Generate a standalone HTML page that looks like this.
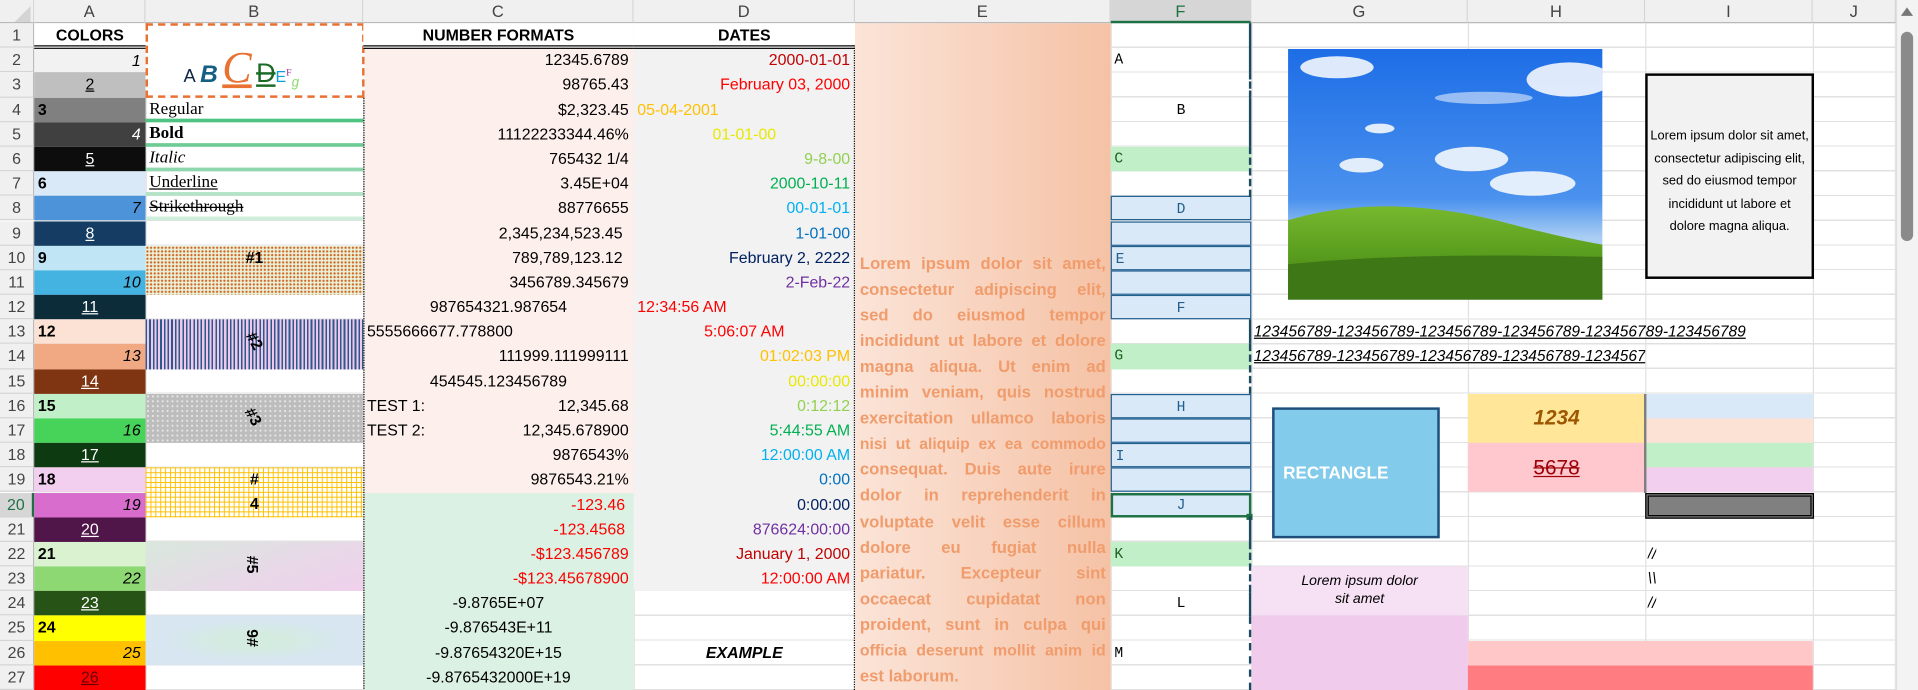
<!DOCTYPE html>
<html><head><meta charset="utf-8"><style>
html,body{margin:0;padding:0;width:1918px;height:690px;overflow:hidden;background:#fff}
#s{position:relative;width:1568px;height:564px;transform:scale(1.22321,1.2234);transform-origin:0 0;font-family:"Liberation Sans Narrow","Liberation Sans",sans-serif;font-size:13px;color:#000;overflow:hidden}
#s div{position:absolute;box-sizing:border-box;white-space:nowrap}
.c{height:20.2px;line-height:20.2px;overflow:hidden}
.r{text-align:right;padding-right:4px}
.l{text-align:left;padding-left:3px}
.m{text-align:center}
.h{top:0;height:19px;line-height:19px;text-align:center;color:#444;font-size:13.5px;background:#f0f0f0;border-right:1px solid #d4d4d4;border-bottom:1px solid #b8b8b8;font-family:"Liberation Sans",sans-serif}
.n{left:0;width:28px;height:20.2px;line-height:20.2px;text-align:center;color:#444;background:#f0f0f0;border-bottom:1px solid #d4d4d4;border-right:1px solid #b8b8b8;font-size:13px;font-family:"Liberation Sans",sans-serif}
.vl{top:19px;height:545px;width:1px;background:#e1e1e1}
.A{left:28px;width:91px}.B{left:119px;width:178px}.C{left:297px;width:221px}.D{left:518px;width:181px}.F{left:908px;width:115px;font-family:"Liberation Mono",monospace;font-size:12px}
.w{color:#fff}.u{text-decoration:underline}.i{font-style:italic}.b{font-weight:bold}
.ser{font-family:"Liberation Serif",serif;font-size:14px}
.fb{background:#dae9f8;border:1px solid #215f8f;color:#215f8f}
.fg{background:#c1f0c8;color:#1b5e20}
.el{left:703px;width:201px;height:21.1px;line-height:21.1px;font-weight:bold;font-size:13.6px;color:#f09c6c;text-align:justify;text-align-last:justify;overflow:visible}
</style></head><body><div id="s">
<!-- grid -->
<div style="left:28px;top:19px;width:1522px;height:545px;background:repeating-linear-gradient(to bottom,transparent 0,transparent 19.185px,#e1e1e1 19.185px,#e1e1e1 20.185px)"></div>
<div class="vl" style="left:119px"></div><div class="vl" style="left:297px"></div><div class="vl" style="left:518px"></div><div class="vl" style="left:699px"></div><div class="vl" style="left:908px"></div><div class="vl" style="left:1023px"></div><div class="vl" style="left:1200px"></div><div class="vl" style="left:1345px"></div><div class="vl" style="left:1482px"></div><div class="vl" style="left:1549px"></div>
<!-- headers -->
<div class="h" style="left:0;width:28px"></div>
<div style="left:12px;top:5px;width:0;height:0;border-left:13px solid transparent;border-bottom:13px solid #d4d4d4"></div>
<div class="h" style="left:28px;width:91px">A</div><div class="h" style="left:119px;width:178px">B</div><div class="h" style="left:297px;width:221px">C</div><div class="h" style="left:518px;width:181px">D</div><div class="h" style="left:699px;width:209px">E</div>
<div class="h" style="left:908px;width:115px;background:#d6d6d6;border-bottom:2px solid #1e7145;color:#1e7145">F</div>
<div class="h" style="left:1023px;width:177px">G</div><div class="h" style="left:1200px;width:145px">H</div><div class="h" style="left:1345px;width:137px">I</div><div class="h" style="left:1482px;width:68px">J</div>
<!-- scrollbar -->
<div style="left:1550px;top:0;width:18px;height:564px;background:#f3f3f3;border-left:1px solid #e0e0e0"></div>
<div style="left:1554px;top:6px;width:0;height:0;border-left:5px solid transparent;border-right:5px solid transparent;border-bottom:7px solid #777"></div>
<div style="left:1554px;top:26px;width:10px;height:171px;background:#8a8a8a;border-radius:5px"></div>
<!-- row numbers -->
<div class="n" style="top:19px">1</div><div class="n" style="top:39.2px">2</div><div class="n" style="top:59.4px">3</div><div class="n" style="top:79.6px">4</div><div class="n" style="top:99.7px">5</div><div class="n" style="top:119.9px">6</div><div class="n" style="top:140.1px">7</div><div class="n" style="top:160.3px">8</div><div class="n" style="top:180.5px">9</div><div class="n" style="top:200.7px">10</div><div class="n" style="top:220.9px">11</div><div class="n" style="top:241px">12</div><div class="n" style="top:261.2px">13</div><div class="n" style="top:281.4px">14</div><div class="n" style="top:301.6px">15</div><div class="n" style="top:321.8px">16</div><div class="n" style="top:342px">17</div><div class="n" style="top:362.1px">18</div><div class="n" style="top:382.3px">19</div>
<div class="n" style="top:402.5px;background:#d6d6d6;color:#1e7145;border-right:2px solid #1e7145">20</div>
<div class="n" style="top:422.7px">21</div><div class="n" style="top:442.9px">22</div><div class="n" style="top:463.1px">23</div><div class="n" style="top:483.3px">24</div><div class="n" style="top:503.4px">25</div><div class="n" style="top:523.6px">26</div><div class="n" style="top:543.8px">27</div>

<!-- Column A -->
<div class="c A m b" style="top:19px;height:21px;border-bottom:3px double #000;background:#fff">COLORS</div>
<div class="c A r i" style="top:40.2px;background:#f2f2f2;height:19.2px">1</div>
<div class="c A m u" style="top:59.4px;background:#bfbfbf">2</div>
<div class="c A l b" style="top:79.6px;background:#808080">3</div>
<div class="c A r i w" style="top:99.7px;background:#404040">4</div>
<div class="c A m u w" style="top:119.9px;background:#0d0d0d">5</div>
<div class="c A l b" style="top:140.1px;background:#dae9f8">6</div>
<div class="c A r i" style="top:160.3px;background:#4d93d9">7</div>
<div class="c A m u w" style="top:180.5px;background:#153d64">8</div>
<div class="c A l b" style="top:200.7px;background:#c0e6f5">9</div>
<div class="c A r i" style="top:220.9px;background:#44b3e1">10</div>
<div class="c A m u w" style="top:241px;background:#0c2c3a">11</div>
<div class="c A l b" style="top:261.2px;background:#fbe2d5">12</div>
<div class="c A r i" style="top:281.4px;background:#f1a983">13</div>
<div class="c A m u w" style="top:301.6px;background:#7f3511">14</div>
<div class="c A l b" style="top:321.8px;background:#c1f0c8">15</div>
<div class="c A r i" style="top:342px;background:#47d359">16</div>
<div class="c A m u w" style="top:362.1px;background:#0e3a12">17</div>
<div class="c A l b" style="top:382.3px;background:#f2ceef">18</div>
<div class="c A r i" style="top:402.5px;background:#d86dcd">19</div>
<div class="c A m u w" style="top:422.7px;background:#501549">20</div>
<div class="c A l b" style="top:442.9px;background:#daf2d0">21</div>
<div class="c A r i" style="top:463.1px;background:#8ed873">22</div>
<div class="c A m u w" style="top:483.3px;background:#275317">23</div>
<div class="c A l b" style="top:503.4px;background:#ffff00">24</div>
<div class="c A r i" style="top:523.6px;background:#ffc000">25</div>
<div class="c A m u" style="top:543.8px;background:#ff0000;color:#600">26</div>

<!-- Column B -->
<div style="left:119px;top:19px;width:179px;height:61px;border:2px dashed #e97132;background:#fff"></div>
<div style="left:150px;top:38px;height:34px;line-height:34px;font-family:'Liberation Sans',sans-serif">
<span style="font-size:15px;color:#0e2841">A</span>
<span style="font-size:20px;color:#156082;font-weight:bold;font-style:italic">B</span>
<span style="font-size:36px;color:#e97132;font-style:italic;font-family:'Liberation Serif',serif;text-decoration:underline">C</span>
<span style="font-size:22px;color:#196b24;text-decoration:underline line-through">D</span><span style="font-size:13px;color:#0f9ed5;text-decoration:underline double line-through">E</span><sup style="font-size:8px;color:#a02b93;font-family:'Liberation Serif',serif">F</sup><sub style="font-size:11px;color:#8ed873;font-style:italic">g</sub></div>
<div class="c B l ser" style="top:79.6px;border-bottom:3px solid #4fc381">Regular</div>
<div class="c B l ser b" style="top:99.7px;border-bottom:3px solid #6ecb96">Bold</div>
<div class="c B l ser i" style="top:119.9px;border-bottom:3px solid #8ed6ab">Italic</div>
<div class="c B l ser u" style="top:140.1px;border-bottom:3px solid #b2e3c6">Underline</div>
<div class="c B l ser" style="top:160.3px;border-bottom:3px solid #cdeedb;text-decoration:line-through">Strikethrough</div>
<div class="B m b" style="top:200.7px;height:40.3px;line-height:20px;background-color:#eaf0d8;background-image:radial-gradient(#d06a2a 0.8px,transparent 1.1px);background-size:3px 3px">#1</div>
<div class="B m b" style="top:261.2px;height:40.4px;background:repeating-linear-gradient(to right,#2a5a8a 0,#2a5a8a 1.3px,#f0c8ec 1.3px,#f0c8ec 3px)"><span style="position:absolute;left:82px;top:10px;display:block;transform:rotate(60deg);background:transparent">#2</span></div>
<div class="B m b" style="top:321.8px;height:40.3px;background-color:#bdbdbd;background-image:radial-gradient(#e8e8e8 0.7px,transparent 1px);background-size:4px 4px"><span style="position:absolute;left:81px;top:11px;display:block;transform:rotate(60deg)">#3</span></div>
<div class="B m b" style="top:382.3px;height:40.4px;line-height:20px;background-color:#fff;background-image:linear-gradient(#ffc000 1px,transparent 1px),linear-gradient(90deg,#ffc000 1px,transparent 1px);background-size:4px 4px">#<br>4</div>
<div class="B m b" style="top:442.9px;height:40.4px;background:linear-gradient(160deg,#d8e8dc,#e8d8e8 60%,#f0d0ec)"><span style="position:absolute;left:80px;top:11px;display:block;transform:rotate(90deg)">#5</span></div>
<div class="B m b" style="top:503.4px;height:40.4px;background:radial-gradient(ellipse at 50% 50%,#d4ecdf 20%,#d8e6f2 60%)"><span style="position:absolute;left:80px;top:11px;display:block;transform:rotate(-90deg)">#6</span></div>
<div style="left:297px;top:79.6px;width:0;height:485px;border-left:1px dotted #000"></div>

<!-- Column C -->
<div style="left:298px;top:40px;width:220px;height:362.5px;background:#fdf0ec"></div>
<div style="left:298px;top:402.5px;width:220px;height:162px;background:#dbf1e3"></div>
<div class="c C m b" style="top:19px;height:21px;border-bottom:3px double #000;background:#fff">NUMBER FORMATS</div>
<div class="c C r" style="top:39.2px">12345.6789</div>
<div class="c C r" style="top:59.4px">98765.43</div>
<div class="c C r" style="top:79.6px">$2,323.45</div>
<div class="c C r" style="top:99.7px">11122233344.46%</div>
<div class="c C r" style="top:119.9px">765432 1/4</div>
<div class="c C r" style="top:140.1px">3.45E+04</div>
<div class="c C r" style="top:160.3px">88776655</div>
<div class="c C r" style="top:180.5px;padding-right:9px">2,345,234,523.45</div>
<div class="c C r" style="top:200.7px;padding-right:9px">789,789,123.12</div>
<div class="c C r" style="top:220.9px">3456789.345679</div>
<div class="c C m" style="top:241px">987654321.987654</div>
<div class="c C l" style="top:261.2px">5555666677.778800</div>
<div class="c C r" style="top:281.4px">111999.111999111</div>
<div class="c C m" style="top:301.6px">454545.123456789</div>
<div class="c C l" style="top:321.8px">TEST 1:</div><div class="c C r" style="top:321.8px">12,345.68</div>
<div class="c C l" style="top:342px">TEST 2:</div><div class="c C r" style="top:342px">12,345.678900</div>
<div class="c C r" style="top:362.1px">9876543%</div>
<div class="c C r" style="top:382.3px">9876543.21%</div>
<div class="c C r" style="top:402.5px;color:#f00;padding-right:7px">-123.46</div>
<div class="c C r" style="top:422.7px;color:#f00;padding-right:7px">-123.4568</div>
<div class="c C r" style="top:442.9px;color:#f00">-$123.456789</div>
<div class="c C r" style="top:463.1px;color:#f00">-$123.45678900</div>
<div class="c C m" style="top:483.3px">-9.8765E+07</div>
<div class="c C m" style="top:503.4px">-9.876543E+11</div>
<div class="c C m" style="top:523.6px">-9.87654320E+15</div>
<div class="c C m" style="top:543.8px">-9.8765432000E+19</div>

<!-- Column D -->
<div style="left:518px;top:40px;width:181px;height:443.3px;background:#f2f2f2"></div>
<div class="c D m b" style="top:19px;height:21px;border-bottom:3px double #000;background:#fff">DATES</div>
<div class="c D r" style="top:39.2px;color:#c00000">2000-01-01</div>
<div class="c D r" style="top:59.4px;color:#f00">February 03, 2000</div>
<div class="c D l" style="top:79.6px;color:#ffc000">05-04-2001</div>
<div class="c D m" style="top:99.7px;color:#e8e800">01-01-00</div>
<div class="c D r" style="top:119.9px;color:#92d050">9-8-00</div>
<div class="c D r" style="top:140.1px;color:#00b050">2000-10-11</div>
<div class="c D r" style="top:160.3px;color:#00b0f0">00-01-01</div>
<div class="c D r" style="top:180.5px;color:#0070c0">1-01-00</div>
<div class="c D r" style="top:200.7px;color:#002060">February 2, 2222</div>
<div class="c D r" style="top:220.9px;color:#7030a0">2-Feb-22</div>
<div class="c D l" style="top:241px;color:#f00">12:34:56 AM</div>
<div class="c D m" style="top:261.2px;color:#f00">5:06:07 AM</div>
<div class="c D r" style="top:281.4px;color:#ffc000">01:02:03 PM</div>
<div class="c D r" style="top:301.6px;color:#e8e800">00:00:00</div>
<div class="c D r" style="top:321.8px;color:#92d050">0:12:12</div>
<div class="c D r" style="top:342px;color:#00b050">5:44:55 AM</div>
<div class="c D r" style="top:362.1px;color:#00b0f0">12:00:00 AM</div>
<div class="c D r" style="top:382.3px;color:#0070c0">0:00</div>
<div class="c D r" style="top:402.5px;color:#002060">0:00:00</div>
<div class="c D r" style="top:422.7px;color:#7030a0">876624:00:00</div>
<div class="c D r" style="top:442.9px;color:#c00000">January 1, 2000</div>
<div class="c D r" style="top:463.1px;color:#f00">12:00:00 AM</div>
<div class="c D m b i" style="top:523.6px">EXAMPLE</div>
<div style="left:698px;top:39px;width:0;height:525px;border-left:1px dotted #000"></div>

<!-- Column E -->
<div style="left:699px;top:19px;width:209px;height:545px;background:linear-gradient(to right,#fbe4d8,#f5c2a5)"></div>
<div class="el" style="top:204.5px">Lorem ipsum dolor sit amet,</div>
<div class="el" style="top:225.6px">consectetur adipiscing elit,</div>
<div class="el" style="top:246.7px">sed do eiusmod tempor</div>
<div class="el" style="top:267.8px">incididunt ut labore et dolore</div>
<div class="el" style="top:288.9px">magna aliqua. Ut enim ad</div>
<div class="el" style="top:310px">minim veniam, quis nostrud</div>
<div class="el" style="top:331.1px">exercitation ullamco laboris</div>
<div class="el" style="top:352.2px;font-size:12.8px">nisi ut aliquip ex ea commodo</div>
<div class="el" style="top:373.3px">consequat. Duis aute irure</div>
<div class="el" style="top:394.4px">dolor in reprehenderit in</div>
<div class="el" style="top:415.5px">voluptate velit esse cillum</div>
<div class="el" style="top:436.6px">dolore eu fugiat nulla</div>
<div class="el" style="top:457.7px">pariatur. Excepteur sint</div>
<div class="el" style="top:478.8px">occaecat cupidatat non</div>
<div class="el" style="top:499.9px">proident, sunt in culpa qui</div>
<div class="el" style="top:521px;font-size:13px">officia deserunt mollit anim id</div>
<div class="el" style="top:542.1px;text-align-last:left">est laborum.</div>

<!-- Column F -->
<div class="c F l" style="top:39.2px">A</div>
<div class="c F m" style="top:79.6px">B</div>
<div class="c F l fg" style="top:119.9px">C</div>
<div class="c F m fb" style="top:160.3px">D</div>
<div class="c F fb" style="top:180.5px"></div>
<div class="c F l fb" style="top:200.7px">E</div>
<div class="c F fb" style="top:220.9px"></div>
<div class="c F m fb" style="top:241px">F</div>
<div class="c F l fg" style="top:281.4px">G</div>
<div class="c F m fb" style="top:321.8px">H</div>
<div class="c F fb" style="top:342px"></div>
<div class="c F l fb" style="top:362.1px">I</div>
<div class="c F fb" style="top:382.3px"></div>
<div class="c F m fb" style="top:402.5px;border:2px solid #1e7145;line-height:17px">J</div>
<div style="left:1019px;top:420px;width:5px;height:5px;background:#1e7145"></div>
<div class="c F l fg" style="top:442.9px">K</div>
<div class="c F m" style="top:483.3px">L</div>
<div class="c F l" style="top:523.6px">M</div>
<!-- F right border -->
<div style="left:1021px;top:19px;width:2px;height:40px;background:#1b4a5e"></div>
<div style="left:1021px;top:59px;width:0;height:21px;border-left:2px dashed #1b4a5e"></div>
<div style="left:1021px;top:80px;width:2px;height:40px;background:#1b4a5e"></div>
<div style="left:1021px;top:120px;width:0;height:41px;border-left:2px dashed #1b4a5e"></div>
<div style="left:1021px;top:261px;width:2px;height:20px;background:#1b4a5e"></div>
<div style="left:1021px;top:281px;width:0;height:41px;border-left:2px dashed #1b4a5e"></div>
<div style="left:1021px;top:422px;width:2px;height:21px;background:#1b4a5e"></div>
<div style="left:1021px;top:443px;width:0;height:41px;border-left:2px dashed #1b4a5e"></div>
<div style="left:1021px;top:484px;width:2px;height:20px;background:#1b4a5e"></div>
<div style="left:1021px;top:504px;width:0;height:60px;border-left:2px dashed #1b4a5e"></div>

<!-- Image -->
<svg style="position:absolute;left:1053px;top:40px" width="257" height="205" viewBox="0 0 257 205">
<defs><linearGradient id="sky" x1="0" y1="0" x2="0" y2="1"><stop offset="0" stop-color="#1d6de6"/><stop offset="0.6" stop-color="#4b92ee"/><stop offset="0.75" stop-color="#a9cdf3"/></linearGradient>
<linearGradient id="gr" x1="0" y1="0" x2="0" y2="1"><stop offset="0" stop-color="#77b82e"/><stop offset="0.5" stop-color="#5a9e1e"/><stop offset="1" stop-color="#3c7a14"/></linearGradient></defs>
<rect width="257" height="205" fill="url(#sky)"/>
<g fill="#fff" opacity="0.85"><ellipse cx="40" cy="15" rx="30" ry="9"/><ellipse cx="230" cy="25" rx="35" ry="14"/><ellipse cx="150" cy="90" rx="30" ry="10"/><ellipse cx="200" cy="110" rx="35" ry="10"/><ellipse cx="60" cy="95" rx="18" ry="6"/><ellipse cx="160" cy="40" rx="40" ry="5" opacity="0.6"/><ellipse cx="75" cy="65" rx="12" ry="4"/></g>
<path d="M0 140 C60 122 120 128 170 140 C200 148 230 155 257 160 L257 205 L0 205 Z" fill="url(#gr)"/>
<path d="M0 205 L0 176 C80 168 170 168 257 170 L257 205 Z" fill="#3e7816"/>
</svg>

<!-- I text box -->
<div style="left:1345px;top:60px;width:138px;height:168px;border:2px solid #000;background:#f2f2f2;white-space:normal;text-align:center;font-size:10.5px;line-height:18.5px;padding:40px 2px 0">Lorem ipsum dolor sit amet, consectetur adipiscing elit, sed do eiusmod tempor incididunt ut labore et dolore magna aliqua.</div>

<!-- G13 / G14 -->
<div class="c i" style="left:1025px;top:261.2px;width:424px;font-size:12.7px;text-decoration:underline">123456789-123456789-123456789-123456789-123456789-123456789</div>
<div class="c i" style="left:1025px;top:281.4px;width:320px;font-size:12.7px;text-decoration:underline">123456789-123456789-123456789-123456789-123456789-123456789</div>

<!-- Rectangle -->
<div style="left:1040px;top:333px;width:137px;height:107px;background:#83cbeb;border:2px solid #1f4e79"></div>
<div style="left:1049px;top:378px;color:#fff;font-weight:bold;font-size:14px;line-height:17px">RECTANGLE</div>

<!-- H -->
<div style="left:1200px;top:321.8px;width:145px;height:40.4px;background:#ffe699;text-align:center;line-height:40px;font-size:17px;font-weight:bold;font-style:italic;color:#9c5700">1234</div>
<div style="left:1200px;top:362.1px;width:145px;height:40.4px;background:#ffc7ce;text-align:center;line-height:42px;font-size:17px;color:#9c0006;text-decoration:underline line-through">5678</div>
<!-- I -->
<div class="c" style="left:1345px;top:321.8px;width:137px;background:#dae9f8"></div>
<div class="c" style="left:1345px;top:342px;width:137px;background:#fbe2d5"></div>
<div class="c" style="left:1345px;top:362.1px;width:137px;background:#c1f0c8"></div>
<div class="c" style="left:1345px;top:382.3px;width:137px;background:#f2ceef"></div>
<div style="left:1344px;top:321.8px;width:2px;height:81px;background:#7f7f7f"></div>
<div style="left:1345px;top:402.5px;width:138px;height:21px;background:#808080;border:3px double #000"></div>
<div class="c i" style="left:1347px;top:442.9px">//</div>
<div class="c i" style="left:1347px;top:463.1px">\\</div>
<div class="c i" style="left:1347px;top:483.3px">//</div>
<!-- G23 etc -->
<div style="left:1023px;top:463.1px;width:177px;height:40.4px;background:#f6e1f4;text-align:center;white-space:normal;font-style:italic;font-size:11.5px;line-height:15px;padding-top:5px">Lorem ipsum dolor<br>sit amet</div>
<div style="left:1023px;top:503.4px;width:177px;height:61px;background:#f0cbec"></div>
<div style="left:1200px;top:523.6px;width:282px;height:20.2px;background:#ffc7c7"></div>
<div style="left:1200px;top:543.8px;width:282px;height:21px;background:#ff7c80"></div>
</div></body></html>
